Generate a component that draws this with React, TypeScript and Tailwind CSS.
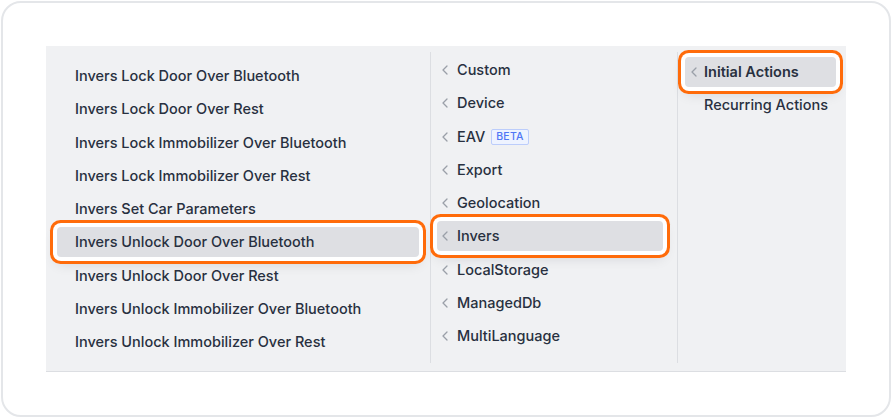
import React from 'react';

const actions = [
  'Invers Lock Door Over Bluetooth',
  'Invers Lock Door Over Rest',
  'Invers Lock Immobilizer Over Bluetooth',
  'Invers Lock Immobilizer Over Rest',
  'Invers Set Car Parameters',
  'Invers Unlock Door Over Bluetooth',
  'Invers Unlock Door Over Rest',
  'Invers Unlock Immobilizer Over Bluetooth',
  'Invers Unlock Immobilizer Over Rest',
];

const categories = [
  'Custom',
  'Device',
  'EAV',
  'Export',
  'Geolocation',
  'Invers',
  'LocalStorage',
  'ManagedDb',
  'MultiLanguage',
];

const highlight =
  'bg-[#dedfe3] rounded-[4px] shadow-[0_0_0_4px_#ffffff,0_0_0_7px_#ff6b0a,0_6px_14px_rgba(15,23,42,0.14)]';

const Chevron = () => (
  <svg width="6" height="10" viewBox="0 0 6 10" fill="none" className="shrink-0 text-[#9a9fa8]">
    <path d="M5 1 1 5l4 4" stroke="currentColor" strokeWidth="1.3" strokeLinecap="round" strokeLinejoin="round" />
  </svg>
);

const Divider = () => <div className="w-px bg-[#dcdee2] mt-[6px] mb-[8px] shrink-0" />;

const App = () => {
  return (
    <div
      className="w-[892px] h-[418px] bg-white p-px"
      style={{ fontFamily: 'Inter, "Noto Sans", sans-serif' }}
    >
      <div className="h-full border-2 border-[#e4e6e9] rounded-[20px] px-[43px] pt-[43px]">
        <div className="flex h-[326px] bg-[#f0f1f3] border-b border-[#dcdee2]">
          {/* actions */}
          <div className="w-[384px] flex flex-col gap-[3.25px] pt-[15px] px-[11px]">
            {actions.map((a, i) => (
              <div
                key={a}
                className={`h-[30px] flex items-center pl-[18px] text-[14.5px] font-medium text-[#283040] ${
                  i === 5 ? highlight : ''
                }`}
              >
                {a}
              </div>
            ))}
          </div>
          <Divider />
          {/* categories */}
          <div className="w-[246px] flex flex-col gap-[3.25px] pt-[9px] pl-[6px] pr-[14px]">
            {categories.map((c, i) => (
              <div
                key={c}
                className={`h-[30px] flex items-center gap-[9px] pl-[5px] text-[14.5px] font-medium text-[#283040] ${
                  i === 5 ? highlight : ''
                }`}
              >
                <Chevron />
                <span>{c}</span>
                {c === 'EAV' && (
                  <span className="ml-[-3px] h-[16px] px-[4px] flex items-center border border-[#bccdfb] bg-[#eef3ff] rounded-[2px] text-[10.5px] font-medium text-[#4f76f5] tracking-[0.02em]">
                    BETA
                  </span>
                )}
              </div>
            ))}
          </div>
          <Divider />
          {/* sub actions */}
          <div className="flex-1 flex flex-col gap-[3.25px] pt-[11px] pl-[7px] pr-[10px]">
            <div className={`h-[30px] flex items-center gap-[7px] pl-[6px] text-[14.5px] font-semibold text-[#283040] ${highlight}`}>
              <Chevron />
              <span>Initial Actions</span>
            </div>
            <div className="h-[30px] flex items-center pl-[19px] text-[14.5px] font-medium text-[#283040]">
              Recurring Actions
            </div>
          </div>
        </div>
      </div>
    </div>
  );
};

export default App;
